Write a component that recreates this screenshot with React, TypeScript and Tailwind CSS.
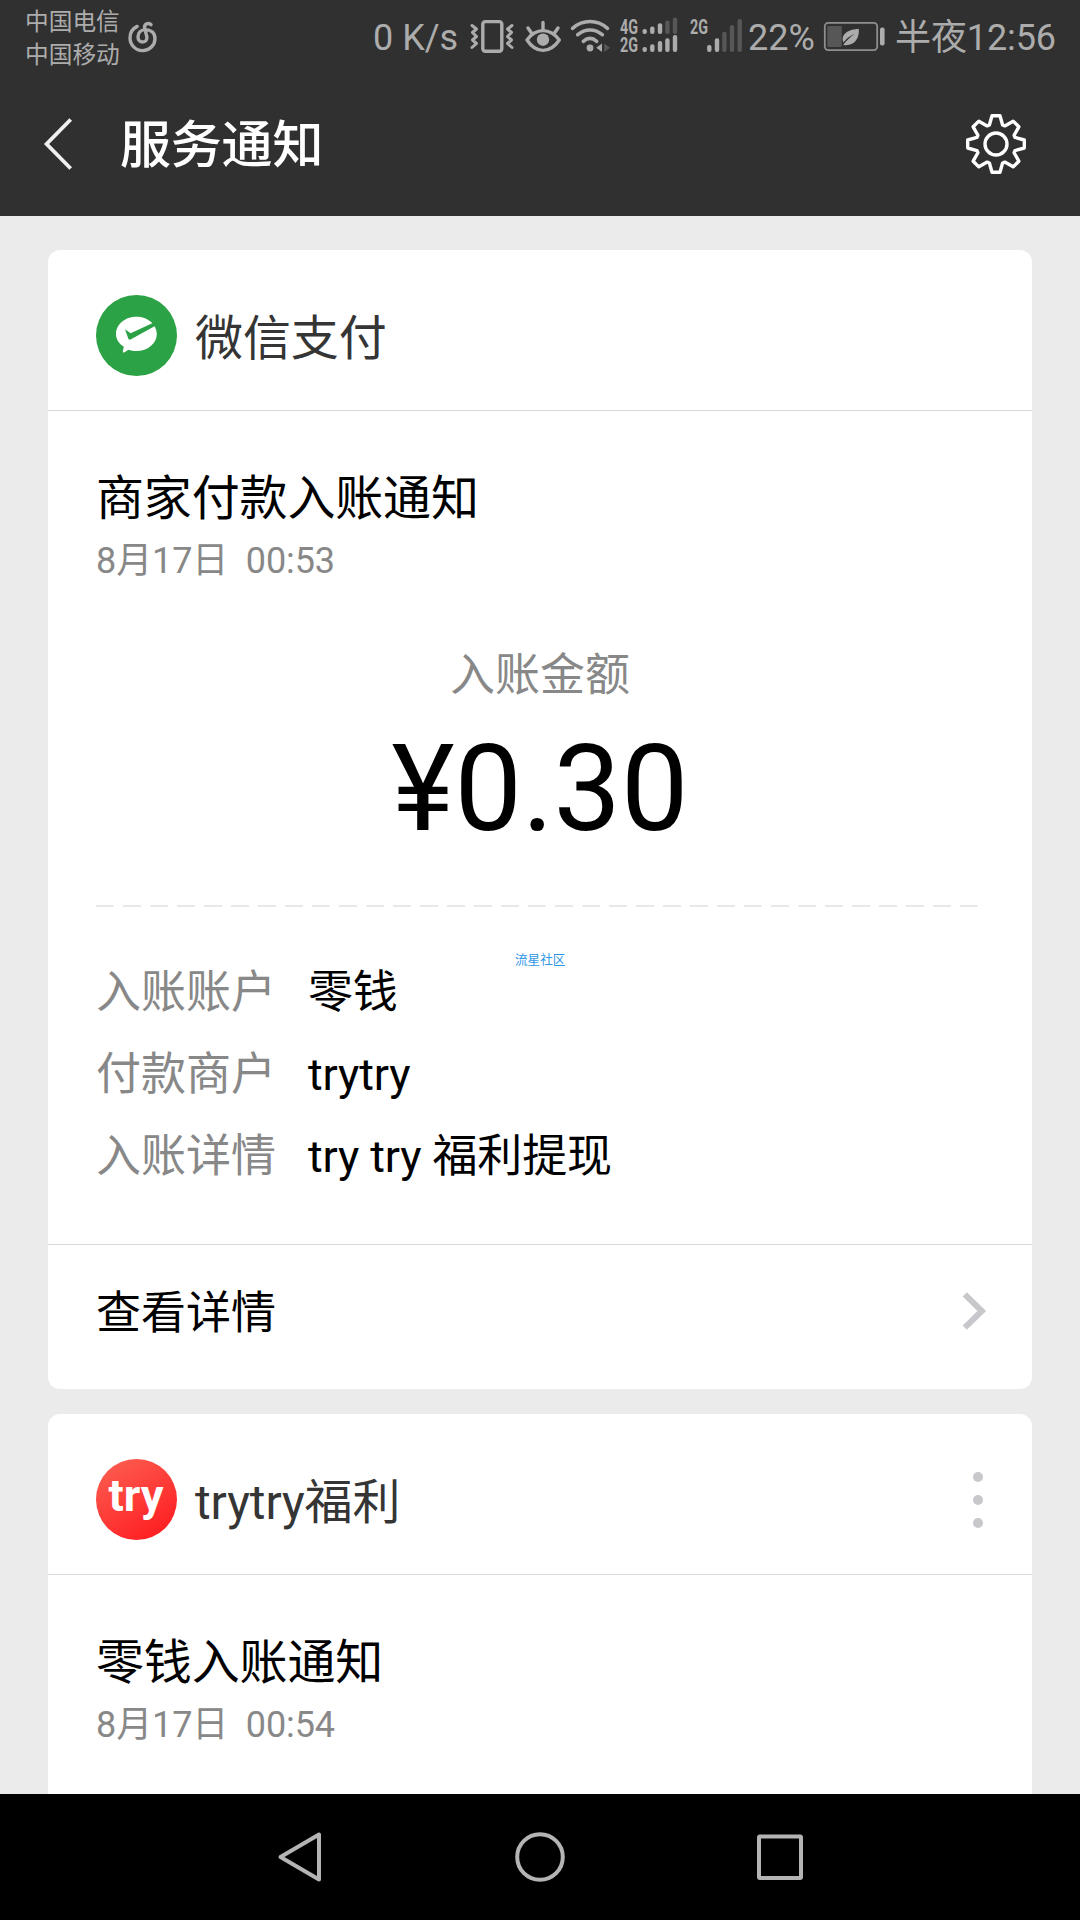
import React from 'react';

interface DetailItem {
  label: string;
  value: string;
}

interface SignalBar {
  x: number;
  top: number;
  bottom: number;
  dim?: boolean;
}

const DETAILS: DetailItem[] = [
  { label: '入账账户', value: '零钱' },
  { label: '付款商户', value: 'trytry' },
  { label: '入账详情', value: 'try try 福利提现' },
];

const SIM1_BARS: SignalBar[] = [
  { x: 24.7, top: 29, bottom: 34 },
  { x: 32.3, top: 26.5, bottom: 34 },
  { x: 40, top: 23.3, bottom: 34 },
  { x: 47.4, top: 20.5, bottom: 34, dim: true },
  { x: 55, top: 17.5, bottom: 34, dim: true },
  { x: 24.7, top: 47, bottom: 52 },
  { x: 32.3, top: 44.3, bottom: 52 },
  { x: 40, top: 41, bottom: 52 },
  { x: 47.4, top: 38.3, bottom: 52 },
  { x: 55, top: 35, bottom: 52 },
];

const SIM2_BARS: SignalBar[] = [
  { x: 19.3, top: 45, bottom: 52 },
  { x: 27, top: 38.3, bottom: 52 },
  { x: 34.4, top: 31.7, bottom: 52, dim: true },
  { x: 42, top: 25, bottom: 52, dim: true },
  { x: 49.7, top: 19, bottom: 52, dim: true },
];

// 齿轮的八个齿，每个齿旋转 45 度
const GEAR_POINTS = Array.from({ length: 8 })
  .flatMap((_, i) => {
    const a = (i * Math.PI) / 4;
    return [
      [-6.6, -19],
      [-4, -28.3],
      [4, -28.3],
      [6.6, -19],
    ].map(([x, y]) => {
      const px = x * Math.cos(a) - y * Math.sin(a) + 30;
      const py = x * Math.sin(a) + y * Math.cos(a) + 30;
      return `${px.toFixed(2)},${py.toFixed(2)}`;
    });
  })
  .join(' ');

const Bars: React.FC<{ bars: SignalBar[] }> = ({ bars }) => (
  <>
    {bars.map((bar) => (
      <rect
        key={`${bar.x}-${bar.bottom}`}
        x={bar.x - 2.2}
        y={bar.top}
        width="4.4"
        height={bar.bottom - bar.top}
        rx="2"
        fill={bar.dim ? '#575757' : '#acacac'}
      />
    ))}
  </>
);

const NetworkLabel: React.FC<{ y: number; text: string }> = ({ y, text }) => (
  <text
    x="0"
    y={y}
    fontSize="20"
    fontWeight="700"
    textLength="18"
    lengthAdjust="spacingAndGlyphs"
    fill="#acacac"
  >
    {text}
  </text>
);

const StatusBar: React.FC = () => (
  <div className="flex h-[72px] shrink-0 items-start pl-[25px] text-[#acacac]">
    <div className="w-[102px] pt-[6px] text-[23.7px] leading-[33px]">
      <div>中国电信</div>
      <div>中国移动</div>
    </div>
    <svg className="h-[72px] w-[32px]" viewBox="127 0 32 72" fill="none" stroke="#acacac" strokeWidth="3.4" strokeLinecap="round">
      <path d="M137.2 26.4C132.6 28.6 130 33 130 37.8C130 45 135.6 50.6 142.6 50.6C149.6 50.6 155 45.2 155 38.4C155 32.6 150.4 29.6 145.6 29.6C140.8 29.6 138 33 138 37C138 40 140 42 142.6 42C145.6 42 147.4 39.8 146.8 36.6L144.6 28C144 24.6 147.6 22 151 24.6" />
    </svg>
    <span className="ml-[214px] w-[96px] text-[36px] leading-[77px] whitespace-nowrap">0 K/s</span>

    {/* 振动 */}
    <svg className="h-[72px] w-[46px]" viewBox="469 0 46 72" fill="none" stroke="#acacac" strokeWidth="3.4">
      <rect x="482.8" y="21.6" width="19" height="29.6" rx="2.5" />
      <path d="M472 25.5L476.5 29L472.5 32.5L476.5 36.5L472.5 40L476.5 43.5L472 47.5M512 25.5L507.5 29L511.5 32.5L507.5 36.5L511.5 40L507.5 43.5L512 47.5" strokeWidth="3" strokeLinejoin="round" strokeLinecap="round" />
    </svg>

    {/* 护眼模式 */}
    <svg className="h-[72px] w-[50px]" viewBox="515 0 50 72" fill="none" stroke="#acacac" strokeWidth="3.4" strokeLinecap="round">
      <path d="M527 40C536 27.5 550 27.5 559.3 40C550 53.8 536 53.8 527 40Z" strokeLinejoin="round" />
      <circle cx="543" cy="39.7" r="6.2" fill="#acacac" stroke="none" />
      <path d="M543 22.5V29M528 28L531.5 33M558 28L554.5 33" />
    </svg>

    {/* WiFi */}
    <svg className="h-[72px] w-[50px]" viewBox="565 0 50 72" fill="none" stroke="#acacac" strokeWidth="3.6" strokeLinecap="round">
      <path d="M572.5 28.3C583 19.3 597 19.3 607.5 28.3M577.7 34.7C585 28.4 595 28.4 602.3 34.7M583.3 41.3C587.5 37.7 592.5 37.7 596.7 41.3" />
      <circle cx="590" cy="48" r="3.4" fill="#acacac" stroke="none" />
      <path d="M602 43.5V52L596.3 47.7Z" fill="#acacac" stroke="none" />
      <path d="M604.3 43.5V52L610 47.7Z" fill="#575757" stroke="none" />
    </svg>

    <svg className="ml-[5px] h-[72px] w-[70px]" viewBox="0 0 70 72">
      <NetworkLabel y={33.8} text="4G" />
      <NetworkLabel y={52} text="2G" />
      <Bars bars={SIM1_BARS} />
    </svg>
    <svg className="h-[72px] w-[58px]" viewBox="0 0 58 72">
      <NetworkLabel y={33.8} text="2G" />
      <Bars bars={SIM2_BARS} />
    </svg>

    <span className="w-[75px] text-[36px] leading-[77px]">22%</span>
    <svg className="h-[72px] w-[64px]" viewBox="823 0 64 72">
      <rect x="824.8" y="22.9" width="52.4" height="27.2" rx="3.5" fill="none" stroke="#8e8e8e" strokeWidth="1.8" />
      <rect x="827.3" y="26" width="14.5" height="21" rx="1" fill="#575757" />
      <path d="M858.8 28.8C850 29.5 840 33 843.5 42.5C847 38 850 36 854.5 34C850 37.5 846 40.5 843.2 45C855 46.5 859.5 38 858.8 28.8Z" fill="#acacac" />
      <rect x="880" y="27.5" width="4.6" height="18" rx="2" fill="#acacac" />
    </svg>
    <span className="ml-[8px] text-[36px] leading-[77px] tracking-[-0.1px] whitespace-nowrap">半夜12:56</span>
  </div>
);

const TitleBar: React.FC = () => (
  <div className="flex h-[144px] shrink-0 items-center pr-[54px] pl-[42px]">
    <svg className="h-[54px] w-[32px]" viewBox="0 0 32 54" fill="none" stroke="#f0f0f0" strokeWidth="3.8">
      <path d="M28.7 2.5L4.6 27L28.7 51.5" />
    </svg>
    <h1 className="ml-[46px] flex-1 pt-[3px] text-[51px] leading-[60px] font-medium tracking-[-0.2px] text-white">服务通知</h1>
    <svg className="size-[60px]" viewBox="0 0 60 60" fill="none" stroke="#fff" strokeWidth="3.4" strokeLinejoin="round">
      <polygon points={GEAR_POINTS} />
      <circle cx="30" cy="30" r="11" />
    </svg>
  </div>
);

const WePayLogo: React.FC = () => (
  <svg className="size-[81px]" viewBox="0 0 81 81">
    <circle cx="40.5" cy="40.5" r="40.5" fill="#2ba245" />
    <path d="M40.4 21.7C51.7 21.7 60.8 29.4 60.8 39C60.8 48.6 51.7 56 40.4 56C37.4 56 34.8 55.7 32.5 54.8L28 57.4C27 57.8 26.6 57.4 26.8 56.5L27.8 51.8C23 48.8 20 44.2 20 39C20 29.4 29.1 21.7 40.4 21.7Z" fill="#fff" />
    <path d="M29 34.3L34.6 38.2L56.8 28L59.5 30.8L35 44.2C33.6 45 32.7 44.7 32.2 43.2Z" fill="#2ba245" />
  </svg>
);

const TryLogo: React.FC = () => (
  <svg className="size-[81px]" viewBox="0 0 81 81">
    <defs>
      <linearGradient id="try-red" x1="0.2" y1="0" x2="0.8" y2="1">
        <stop offset="0" stopColor="#fd5c50" />
        <stop offset="1" stopColor="#fe1c20" />
      </linearGradient>
    </defs>
    <circle cx="40.5" cy="40.5" r="40.5" fill="url(#try-red)" />
    <text x="12.5" y="51.5" fontSize="45" fontWeight="700" textLength="55" lengthAdjust="spacingAndGlyphs" fill="#fff">
      try
    </text>
  </svg>
);

interface CardHeaderProps {
  logo: React.ReactNode;
  name: string;
  showMore?: boolean;
}

const CardHeader: React.FC<CardHeaderProps> = ({ logo, name, showMore }) => (
  <div className="flex h-[161px] items-center border-b border-[#d9d9d9] pt-[11px] pr-[49px] pl-12">
    {logo}
    <span className="ml-[18px] flex-1 pt-[6px] text-[48px] leading-[60px] tracking-[-0.1px] text-[#353535]">{name}</span>
    {showMore && (
      <div className="flex flex-col gap-[13px]">
        <span className="size-[10px] rounded-full bg-[#c7c7cc]" />
        <span className="size-[10px] rounded-full bg-[#c7c7cc]" />
        <span className="size-[10px] rounded-full bg-[#c7c7cc]" />
      </div>
    )}
  </div>
);

const NoticeTitle: React.FC<{ title: string; time: string }> = ({ title, time }) => (
  <>
    <h2 className="text-[48px] leading-[60px] tracking-[-0.15px]">{title}</h2>
    <p className="mt-[2px] text-[36px] leading-[60px] tracking-[-0.1px] whitespace-pre text-[#888]">{time}</p>
  </>
);

const NavBar: React.FC = () => (
  <div className="flex h-[126px] shrink-0 items-center justify-center bg-black">
    <svg className="h-[52px] w-[540px]" viewBox="270 1831 540 52" fill="none" stroke="#b4b4b4" strokeWidth="4" strokeLinejoin="round">
      <path d="M319 1834.5V1879.5L280.5 1857Z" />
      <circle cx="540" cy="1857" r="22.8" />
      <rect x="759" y="1836.5" width="42" height="41.5" rx="1" />
    </svg>
  </div>
);

export default function App() {
  return (
    <div className="flex h-[1920px] w-[1080px] flex-col overflow-hidden bg-[#ebebeb] font-['Roboto','Noto_Sans_CJK_SC',sans-serif] text-black">
      <header className="flex shrink-0 flex-col bg-[#303030]">
        <StatusBar />
        <TitleBar />
      </header>

      <main className="flex min-h-0 flex-1 flex-col gap-[25px] overflow-hidden px-12 pt-[34px]">
        <section className="h-[1139px] shrink-0 rounded-[12px] bg-white">
          <CardHeader logo={<WePayLogo />} name="微信支付" />

          <div className="relative h-[834px] border-b border-[#d9d9d9] px-12 pt-[58px]">
            <NoticeTitle title="商家付款入账通知" time="8月17日  00:53" />
            <p className="mt-[55px] text-center text-[45px] leading-[60px] text-[#888]">入账金额</p>
            <p className="mt-[13px] text-center text-[120px] leading-[140px]">¥0.30</p>
            <div className="mt-[46px] h-[2px] w-[882px] bg-[repeating-linear-gradient(90deg,#e8e8e8_0_18px,transparent_18px_27px)]" />
            <span className="absolute top-[539px] left-[467px] text-[12.6px] leading-[20px] text-[#2f96e6]">流星社区</span>
            <dl className="mt-[45px] text-[45px] leading-[82px]">
              {DETAILS.map((item) => (
                <div key={item.label} className="flex">
                  <dt className="w-[212px] text-[#888]">{item.label}</dt>
                  <dd className="tracking-[-0.15px]">{item.value}</dd>
                </div>
              ))}
            </dl>
          </div>

          <div className="flex h-[140px] items-center justify-between pr-[45px] pb-[8px] pl-12">
            <span className="pt-[6px] text-[45px] leading-[60px]">查看详情</span>
            <svg className="h-[38px] w-[25px]" viewBox="0 0 25 38" fill="none" stroke="#c7c7cc" strokeWidth="6">
              <path d="M2.8 2.3L19.8 19L2.8 35.7" />
            </svg>
          </div>
        </section>

        <section className="h-[600px] shrink-0 rounded-t-[12px] bg-white">
          <CardHeader logo={<TryLogo />} name="trytry福利" showMore />
          <div className="px-12 pt-[58px]">
            <NoticeTitle title="零钱入账通知" time="8月17日  00:54" />
          </div>
        </section>
      </main>

      <NavBar />
    </div>
  );
}
